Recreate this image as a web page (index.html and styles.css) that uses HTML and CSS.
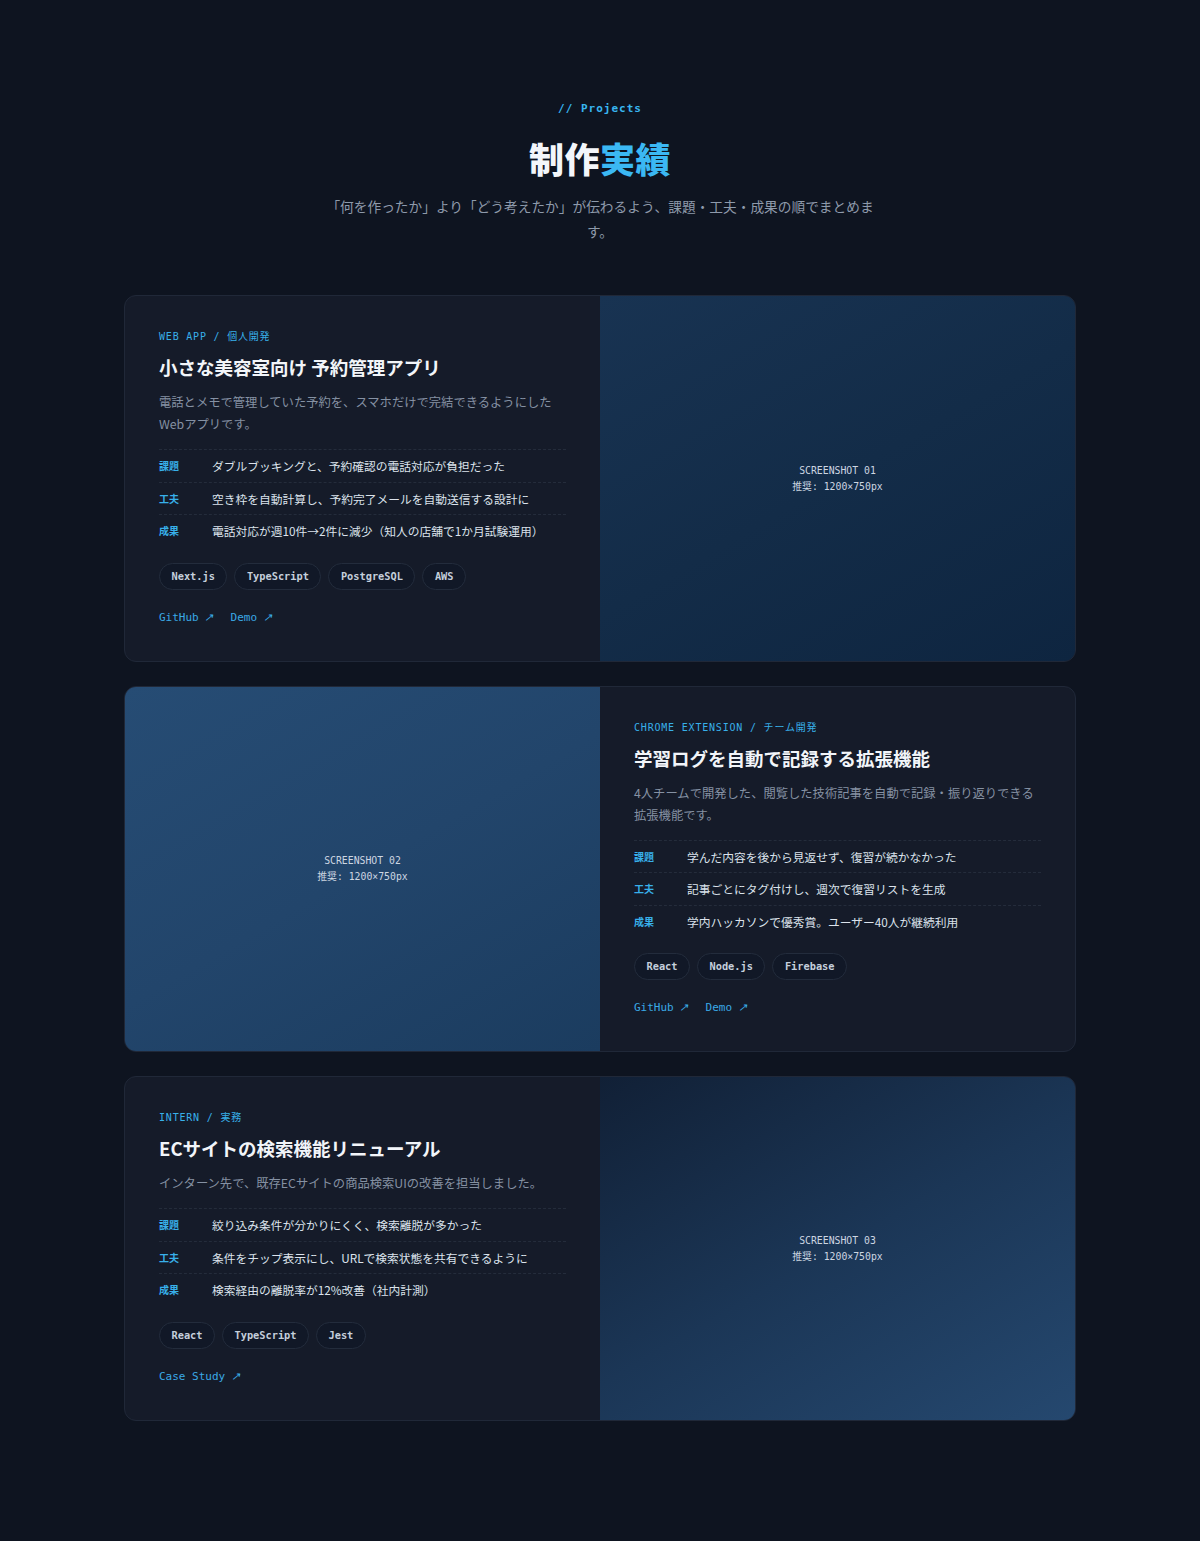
FILE: index.html
```html
<!DOCTYPE html>
<html lang="ja">
<head>
<meta charset="utf-8">
<title>制作実績</title>
<link rel="stylesheet" href="styles.css">
</head>
<body>
<section class="projects">
  <header class="section-head">
    <p class="eyebrow">// Projects</p>
    <h2 class="section-title">制作<span class="accent">実績</span></h2>
    <p class="section-lead">「何を作ったか」より「どう考えたか」が伝わるよう、課題・工夫・成果の順でまとめます。</p>
  </header>

  <div class="cards">
    <article class="card">
      <div class="card-body">
        <p class="card-kind">WEB APP / 個人開発</p>
        <h3 class="card-title">小さな美容室向け 予約管理アプリ</h3>
        <p class="card-desc">電話とメモで管理していた予約を、スマホだけで完結できるようにしたWebアプリです。</p>
        <dl class="facts">
          <div class="fact"><dt>課題</dt><dd>ダブルブッキングと、予約確認の電話対応が負担だった</dd></div>
          <div class="fact"><dt>工夫</dt><dd>空き枠を自動計算し、予約完了メールを自動送信する設計に</dd></div>
          <div class="fact"><dt>成果</dt><dd>電話対応が週10件→2件に減少（知人の店舗で1か月試験運用）</dd></div>
        </dl>
        <ul class="tags">
          <li>Next.js</li><li>TypeScript</li><li>PostgreSQL</li><li>AWS</li>
        </ul>
        <div class="links"><a href="#">GitHub <span class="arrow">↗</span></a><a href="#">Demo <span class="arrow">↗</span></a></div>
      </div>
      <div class="card-shot shot-1">
        <span>SCREENSHOT 01</span>
        <span>推奨: 1200×750px</span>
      </div>
    </article>

    <article class="card">
      <div class="card-shot shot-2">
        <span>SCREENSHOT 02</span>
        <span>推奨: 1200×750px</span>
      </div>
      <div class="card-body">
        <p class="card-kind">CHROME EXTENSION / チーム開発</p>
        <h3 class="card-title">学習ログを自動で記録する拡張機能</h3>
        <p class="card-desc">4人チームで開発した、閲覧した技術記事を自動で記録・振り返りできる拡張機能です。</p>
        <dl class="facts">
          <div class="fact"><dt>課題</dt><dd>学んだ内容を後から見返せず、復習が続かなかった</dd></div>
          <div class="fact"><dt>工夫</dt><dd>記事ごとにタグ付けし、週次で復習リストを生成</dd></div>
          <div class="fact"><dt>成果</dt><dd>学内ハッカソンで優秀賞。ユーザー40人が継続利用</dd></div>
        </dl>
        <ul class="tags">
          <li>React</li><li>Node.js</li><li>Firebase</li>
        </ul>
        <div class="links"><a href="#">GitHub <span class="arrow">↗</span></a><a href="#">Demo <span class="arrow">↗</span></a></div>
      </div>
    </article>

    <article class="card">
      <div class="card-body">
        <p class="card-kind">INTERN / 実務</p>
        <h3 class="card-title">ECサイトの検索機能リニューアル</h3>
        <p class="card-desc">インターン先で、既存ECサイトの商品検索UIの改善を担当しました。</p>
        <dl class="facts">
          <div class="fact"><dt>課題</dt><dd>絞り込み条件が分かりにくく、検索離脱が多かった</dd></div>
          <div class="fact"><dt>工夫</dt><dd>条件をチップ表示にし、URLで検索状態を共有できるように</dd></div>
          <div class="fact"><dt>成果</dt><dd>検索経由の離脱率が12%改善（社内計測）</dd></div>
        </dl>
        <ul class="tags">
          <li>React</li><li>TypeScript</li><li>Jest</li>
        </ul>
        <div class="links"><a href="#">Case Study <span class="arrow">↗</span></a></div>
      </div>
      <div class="card-shot shot-3">
        <span>SCREENSHOT 03</span>
        <span>推奨: 1200×750px</span>
      </div>
    </article>
  </div>
</section>
</body>
</html>
```

FILE: styles.css
```css
* { box-sizing: border-box; }

html, body {
  margin: 0;
  padding: 0;
  background: #0e1420;
}

body {
  font-family: "Noto Sans CJK JP", "Noto Sans", sans-serif;
  color: #e6ebf2;
  min-height: 1541px;
}

.projects {
  width: 952px;
  margin: 0 auto;
  padding: 101px 0 100px;
}

.section-head {
  text-align: center;
  margin-bottom: 51px;
}

.eyebrow {
  margin: 0;
  font-family: "DejaVu Sans Mono", "Liberation Mono", monospace;
  font-size: 11px;
  font-weight: bold;
  letter-spacing: 1px;
  color: #38b6f0;
  line-height: 16px;
}

.section-title {
  margin: 17px 0 0;
  font-size: 35px;
  font-weight: 900;
  line-height: 48px;
  color: #f3f6fa;
  letter-spacing: 0.5px;
}

.section-title .accent {
  color: #3bb8f3;
}

.section-lead {
  width: 560px;
  margin: 12px auto 0;
  font-size: 13.7px;
  line-height: 25px;
  color: #8e9aab;
}

.cards {
  display: flex;
  flex-direction: column;
  gap: 24px;
}

.card {
  display: grid;
  grid-template-columns: 1fr 1fr;
  background: #151b29;
  border: 1px solid #202838;
  border-radius: 12px;
  overflow: hidden;
}

.card-body {
  padding: 33px 34px 35px;
}

.card-kind {
  margin: 0;
  font-family: "DejaVu Sans Mono", "Liberation Mono", "Noto Sans CJK JP", monospace;
  font-size: 10px;
  letter-spacing: 0.8px;
  color: #38b0ea;
  line-height: 16px;
}

.card-title {
  margin: 8px 0 0;
  font-size: 18.5px;
  font-weight: bold;
  line-height: 28px;
  color: #f2f5f9;
}

.card-desc {
  margin: 10px 0 0;
  font-size: 12.3px;
  line-height: 22px;
  color: #8591a3;
}

.facts {
  margin: 14px 0 0;
}

.fact {
  display: flex;
  align-items: center;
  height: 32.5px;
  border-top: 1px dashed #242c3b;
}

.fact dt {
  width: 53px;
  flex: none;
  font-size: 10px;
  font-weight: bold;
  color: #38b0ea;
}

.fact dd {
  margin: 0;
  font-size: 11.75px;
  color: #dce3ec;
}

.tags {
  display: flex;
  flex-wrap: wrap;
  gap: 7px;
  list-style: none;
  margin: 16px 0 0;
  padding: 0;
}

.tags li {
  height: 27px;
  line-height: 25px;
  padding: 0 11.5px;
  border: 1px solid #232c3c;
  border-radius: 999px;
  background: #111827;
  font-family: "DejaVu Sans Mono", "Liberation Mono", monospace;
  font-size: 10.3px;
  font-weight: bold;
  color: #c5cfdc;
}

.links {
  display: flex;
  gap: 16px;
  margin-top: 19px;
}

.links a {
  font-family: "DejaVu Sans Mono", "Liberation Mono", monospace;
  font-size: 11px;
  color: #3aa9e6;
  text-decoration: none;
  line-height: 16px;
}

.links .arrow {
  font-family: "Noto Sans", "DejaVu Sans", sans-serif;
  font-size: 11px;
  display: inline-block;
  transform: skewX(-12deg);
}

.card-shot {
  display: flex;
  flex-direction: column;
  align-items: center;
  justify-content: center;
  gap: 1px;
  font-family: "DejaVu Sans Mono", "Liberation Mono", "Noto Sans CJK JP", monospace;
  font-size: 9.8px;
  line-height: 15px;
  color: #cdd6e2;
}

.shot-1 {
  background: linear-gradient(150deg, #183352 0%, #132c48 50%, #0e2540 100%);
}

.shot-2 {
  background: linear-gradient(150deg, #264c74 0%, #22456b 50%, #1b3c5f 100%);
}

.shot-3 {
  background: linear-gradient(150deg, #112036 0%, #1b3656 50%, #25486f 100%);
}
```
